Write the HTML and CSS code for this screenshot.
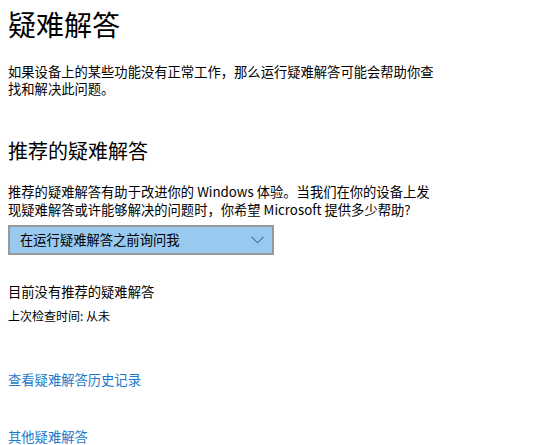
FILE: index.html
```html
<!DOCTYPE html>
<html lang="zh-CN">
<head>
<meta charset="utf-8">
<title>疑难解答</title>
<link rel="stylesheet" href="styles.css">
</head>
<body>
<main class="page">
  <h1 class="title">疑难解答</h1>
  <p class="desc">如果设备上的某些功能没有正常工作，那么运行疑难解答可能会帮助你查找和解决此问题。</p>

  <h2 class="subtitle">推荐的疑难解答</h2>
  <p class="desc desc-2">推荐的疑难解答有助于改进你的 Windows 体验。当我们在你的设备上发现疑难解答或许能够解决的问题时，你希望 Microsoft 提供多少帮助?</p>

  <div class="select">
    <span class="select-text">在运行疑难解答之前询问我</span>
    <svg class="chevron" width="13" height="8" viewBox="0 0 13 8" aria-hidden="true">
      <path d="M0.5 0.8 L6.5 6.8 L12.5 0.8" fill="none" stroke="#4f6f8f" stroke-width="1.1"/>
    </svg>
  </div>

  <p class="status">目前没有推荐的疑难解答</p>
  <p class="last-check">上次检查时间: 从未</p>

  <a class="link link-history" href="#">查看疑难解答历史记录</a>
  <a class="link link-other" href="#">其他疑难解答</a>
</main>
</body>
</html>
```

FILE: styles.css
```css
html, body {
  margin: 0;
  padding: 0;
  background: #ffffff;
}

body {
  font-family: "Noto Sans CJK SC", "Noto Sans", "Liberation Sans", sans-serif;
  color: #000000;
}

.page {
  display: flex;
  flex-direction: column;
  align-items: flex-start;
  padding: 6px 8px 0 8px;
}

.title {
  margin: 0;
  font-size: 28px;
  font-weight: 400;
  line-height: 36px;
}

.desc {
  margin: 21px 0 0 0;
  width: 436px;
  font-size: 13.3px;
  line-height: 17px;
}

.desc-2 {
  margin-top: 18px;
  width: 431px;
  line-height: 18px;
}

.subtitle {
  margin: 40px 0 0 0;
  font-size: 20px;
  font-weight: 400;
  line-height: 28px;
}

.select {
  margin-top: 6px;
  box-sizing: border-box;
  width: 266px;
  height: 30px;
  border: 2px solid #999999;
  background: #99c9ef;
  display: flex;
  align-items: center;
  justify-content: space-between;
  padding: 0 8px 0 10px;
}

.select-text {
  font-size: 13.3px;
  line-height: 20px;
}

.chevron {
  display: block;
}

.status {
  margin: 27px 0 0 0;
  font-size: 13.3px;
  line-height: 20px;
}

.last-check {
  margin: 5px 0 0 0;
  font-size: 12px;
  line-height: 18px;
}

.link {
  display: block;
  color: #1979ca;
  text-decoration: none;
  font-size: 13.3px;
  line-height: 20px;
}

.link-history {
  margin-top: 45px;
}

.link-other {
  margin-top: 37px;
}
```
